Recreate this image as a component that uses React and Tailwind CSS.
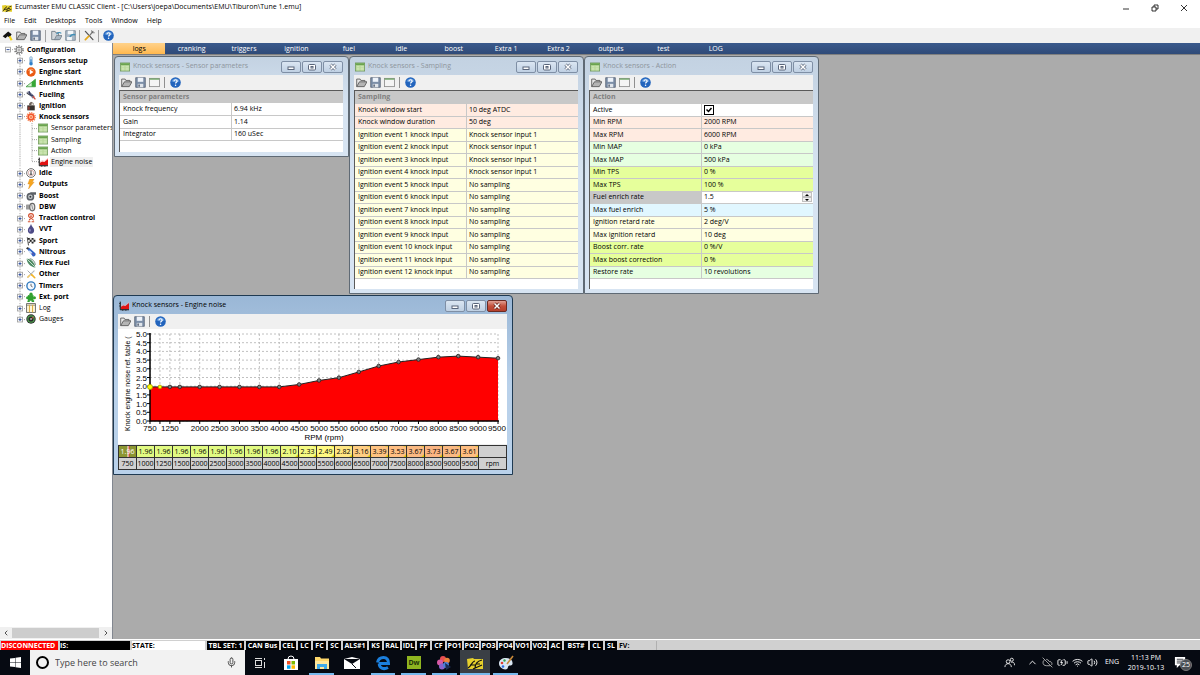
import clsx from 'clsx'
import { Mic, ChevronUp, CloudOff, Wifi, Volume2, BatteryCharging, ChevronLeft, ChevronRight } from 'lucide-react'

const MENUS = ['File', 'Edit', 'Desktops', 'Tools', 'Window', 'Help']

const TABS = ['logs', 'cranking', 'triggers', 'ignition', 'fuel', 'idle', 'boost', 'Extra 1', 'Extra 2', 'outputs', 'test', 'LOG']

const TREE = [
  { label: 'Configuration', level: 0, icon: 'gear', box: 'minus' },
  { label: 'Sensors setup', level: 1, icon: 'thermo', box: 'plus' },
  { label: 'Engine start', level: 1, icon: 'start', box: 'plus' },
  { label: 'Enrichments', level: 1, icon: 'ramp', box: 'plus' },
  { label: 'Fueling', level: 1, icon: 'injector', box: 'plus' },
  { label: 'Ignition', level: 1, icon: 'coil', box: 'plus' },
  { label: 'Knock sensors', level: 1, icon: 'knock', box: 'minus' },
  { label: 'Sensor parameters', level: 2, icon: 'form' },
  { label: 'Sampling', level: 2, icon: 'form' },
  { label: 'Action', level: 2, icon: 'form' },
  { label: 'Engine noise', level: 2, icon: 'chart', selected: true, last: true },
  { label: 'Idle', level: 1, icon: 'idle', box: 'plus' },
  { label: 'Outputs', level: 1, icon: 'bolt', box: 'plus' },
  { label: 'Boost', level: 1, icon: 'turbo', box: 'plus' },
  { label: 'DBW', level: 1, icon: 'throttle', box: 'plus' },
  { label: 'Traction control', level: 1, icon: 'traction', box: 'plus' },
  { label: 'VVT', level: 1, icon: 'drop', box: 'plus' },
  { label: 'Sport', level: 1, icon: 'flag', box: 'plus' },
  { label: 'Nitrous', level: 1, icon: 'bottle', box: 'plus' },
  { label: 'Flex Fuel', level: 1, icon: 'leaf', box: 'plus' },
  { label: 'Other', level: 1, icon: 'tools', box: 'plus' },
  { label: 'Timers', level: 1, icon: 'timer', box: 'plus' },
  { label: 'Ext. port', level: 1, icon: 'puzzle', box: 'plus' },
  { label: 'Log', level: 1, icon: 'log', box: 'plus', plain: true },
  { label: 'Gauges', level: 1, icon: 'gauge', box: 'plus', plain: true, last: true },
]

const PINK = 'bg-[#ffebe1]'
const YELLOW = 'bg-[#ffffe1]'
const GREEN = 'bg-[#e6ffe1]'
const LIME = 'bg-[#e6ff9b]'
const BLUE = 'bg-[#e1f7ff]'

const SENSOR_ROWS = [
  ['Knock frequency', '6.94 kHz', 'bg-white'],
  ['Gain', '1.14', 'bg-white'],
  ['Integrator', '160 uSec', 'bg-white'],
]

const SAMPLING_ROWS = [
  ['Knock window start', '10 deg ATDC', PINK],
  ['Knock window duration', '50 deg', PINK],
  ...Array.from({ length: 12 }, (_, i) => [
    `Ignition event ${i + 1} knock input`,
    i < 4 ? 'Knock sensor input 1' : 'No sampling',
    YELLOW,
  ]),
]

const ACTION_ROWS = [
  ['Active', 'check', 'bg-white'],
  ['Min RPM', '2000 RPM', PINK],
  ['Max RPM', '6000 RPM', PINK],
  ['Min MAP', '0 kPa', GREEN],
  ['Max MAP', '500 kPa', GREEN],
  ['Min TPS', '0 %', LIME],
  ['Max TPS', '100 %', LIME],
  ['Fuel enrich rate', 'spin', 'bg-white'],
  ['Max fuel enrich', '5 %', BLUE],
  ['Ignition retard rate', '2 deg/V', YELLOW],
  ['Max ignition retard', '10 deg', YELLOW],
  ['Boost corr. rate', '0 %/V', LIME],
  ['Max boost correction', '0 %', LIME],
  ['Restore rate', '10 revolutions', GREEN],
]

const NOISE = [
  [750, 1.96, 'bg-[#8c9632]'],
  [1000, 1.96, 'bg-[#e1fa82]'],
  [1250, 1.96, 'bg-[#e1fa82]'],
  [1500, 1.96, 'bg-[#e1fa82]'],
  [2000, 1.96, 'bg-[#e1fa82]'],
  [2500, 1.96, 'bg-[#e1fa82]'],
  [3000, 1.96, 'bg-[#e1fa82]'],
  [3500, 1.96, 'bg-[#e1fa82]'],
  [4000, 1.96, 'bg-[#e1fa82]'],
  [4500, 2.1, 'bg-[#ebfa82]'],
  [5000, 2.33, 'bg-[#f5fa82]'],
  [5500, 2.49, 'bg-[#fffa82]'],
  [6000, 2.82, 'bg-[#ffe682]'],
  [6500, 3.16, 'bg-[#ffcd82]'],
  [7000, 3.39, 'bg-[#ffc382]'],
  [7500, 3.53, 'bg-[#ffbe82]'],
  [8000, 3.67, 'bg-[#fab982]'],
  [8500, 3.73, 'bg-[#fab482]'],
  [9000, 3.67, 'bg-[#fab982]'],
  [9500, 3.61, 'bg-[#ffbe82]'],
]

const FLAGS = [
  ['TBL SET: 1', 'w-[37px]'],
  ['CAN Bus', 'w-[33px]'],
  ['CEL', 'w-[15px]'],
  ['LC', 'w-[13px]'],
  ['FC', 'w-[13px]'],
  ['SC', 'w-[13px]'],
  ['ALS#1', 'w-[24px]'],
  ['KS', 'w-[13px]'],
  ['RAL', 'w-[16px]'],
  ['IDL', 'w-[13px]'],
  ['FP', 'w-[13px]'],
  ['CF', 'w-[13px]'],
  ['PO1', 'w-[15px]'],
  ['PO2', 'w-[15px]'],
  ['PO3', 'w-[15px]'],
  ['PO4', 'w-[15px]'],
  ['VO1', 'w-[15px]'],
  ['VO2', 'w-[15px]'],
  ['AC', 'w-[13px]'],
  ['BST#', 'w-[24px]'],
  ['CL', 'w-[13px]'],
  ['SL', 'w-[12px]'],
]

const ICONS = {
  gear: (
    <g fill="none" stroke="#777">
      <circle cx="8" cy="8" r="6.5" strokeWidth="2.4" strokeDasharray="2.2 1.9" />
      <circle cx="8" cy="8" r="4.6" strokeWidth="1.6" />
      <circle cx="8" cy="8" r="1.8" strokeWidth="1.2" />
    </g>
  ),
  thermo: (
    <g>
      <rect x="6" y="1" width="4" height="11" rx="2" fill="#d5e8f7" stroke="#6f9cc4" />
      <path d="M8 5v7" stroke="#2f7fc9" strokeWidth="2" />
      <circle cx="8" cy="12.5" r="2.8" fill="#2f7fc9" />
    </g>
  ),
  start: (
    <g>
      <circle cx="8" cy="8" r="7.5" fill="#ea5a12" />
      <path d="M4 6a5 5 0 0 1 8-1" stroke="#ffb27a" strokeWidth="1.5" fill="none" />
      <path d="M6 4l6 4-6 4z" fill="#fff" />
    </g>
  ),
  ramp: (
    <g>
      <path d="M0 14L15 2v12z" fill="#d8f0d2" stroke="#3c9a3c" strokeWidth="1.3" />
      <path d="M9 14V7L15 2v12z" fill="#35a835" />
    </g>
  ),
  injector: (
    <g>
      <path d="M1 3l4-1 9 8-3 4z" fill="#7b7f96" />
      <path d="M5 2l2 6 4 1" stroke="#333a60" strokeWidth="2" fill="none" />
      <path d="M11 10l4 5" stroke="#c9453a" strokeWidth="2" />
      <path d="M1 5l5 3" stroke="#23252f" strokeWidth="1.5" />
    </g>
  ),
  coil: (
    <g>
      <path d="M2 7h12v8H2z" fill="#37322f" />
      <path d="M5 7V4l3-3 4 2v4z" fill="#6d625b" />
      <path d="M3 9h3v5H3z" fill="#8c3a30" />
      <circle cx="10" cy="5" r="1.4" fill="#e8e4df" />
    </g>
  ),
  knock: (
    <g>
      <circle cx="8" cy="8" r="6" fill="#f2552c" />
      <circle cx="8" cy="8" r="7" fill="none" stroke="#f58a5a" strokeWidth="2" strokeDasharray="2 1.6" />
      <circle cx="8" cy="8" r="3.2" fill="#ffc9a8" />
      <circle cx="8" cy="8" r="1.8" fill="#f47b4a" />
    </g>
  ),
  form: (
    <g>
      <rect x="0.5" y="1.5" width="15" height="13" fill="#b9d99a" stroke="#5f8a4b" />
      <path d="M1 2h14v3H1z" fill="#6aa350" />
      <path d="M3 7.5h4M3 10h4M3 12.5h4M9 7.5h5M9 10h5M9 12.5h5" stroke="#dcefca" />
    </g>
  ),
  chart: (
    <g>
      <path d="M3 13V9l4-2 3 1 6-5v10z" fill="#e11212" />
      <path d="M3 8l4-2 3 1 6-5" stroke="#f3a5a5" fill="none" />
      <path d="M2 1v13h14" stroke="#111" strokeWidth="1.6" fill="none" />
      <path d="M0 4h2M0 8h2M6 14v2M11 14v2" stroke="#111" />
    </g>
  ),
  idle: (
    <g fill="none">
      <circle cx="8" cy="8" r="7" stroke="#666" strokeWidth="1.5" />
      <circle cx="8" cy="8" r="4.5" stroke="#c98a84" strokeWidth="1" />
      <path d="M8 4v6M6 10h4" stroke="#333" strokeWidth="1.5" />
    </g>
  ),
  bolt: <path d="M6 0h7l-3 5h3L4 16l2-8H3z" fill="#f6a51f" stroke="#d98512" strokeWidth=".6" />,
  turbo: (
    <g>
      <path d="M6 2h10v4h-4z" fill="#5b6066" />
      <circle cx="7" cy="9" r="6.2" fill="#5b6066" />
      <circle cx="7" cy="9" r="3.6" fill="#c6cace" />
      <circle cx="7" cy="9" r="1.6" fill="#33373b" />
    </g>
  ),
  throttle: (
    <g>
      <rect x="0" y="4" width="6" height="8" rx="1" fill="#9a9a9a" />
      <ellipse cx="10" cy="8" rx="5" ry="7" fill="#666" />
      <ellipse cx="10" cy="8" rx="3.2" ry="5" fill="#e4e4e4" />
      <path d="M9 4l2 8" stroke="#777" strokeWidth="1.2" />
    </g>
  ),
  traction: (
    <g fill="none" stroke="#d2502f" strokeWidth="1.7">
      <path d="M4 5a4 4 0 0 1 8 0c0 3-7 4-7 7M12 12c0-3-7-4-8-7" />
      <path d="M3 14h4M9 14h4M6 5h4" />
    </g>
  ),
  drop: (
    <g>
      <path d="M8 0c1 4 5 6 5 10a5 5.5 0 0 1-10 0c0-4 4-6 5-10z" fill="#4c4a86" />
      <ellipse cx="6.3" cy="10" rx="1.5" ry="2.5" fill="#8885bb" />
    </g>
  ),
  flag: (
    <g>
      <path d="M2 2l2 13" stroke="#333" strokeWidth="1.4" />
      <path d="M3 3c4-2 7 2 12 0l-1 8c-4 2-6-2-10 0z" fill="#e8e8e8" />
      <path d="M3 3h3v3H3zM9 3h3v3H9zM6 6h3v3H6zM12 6h3v3h-3zM4 9h2v2H4zM9 9h3v3H9z" fill="#222" />
    </g>
  ),
  bottle: (
    <g>
      <path d="M2 3l3-2 10 9c1 3-1 6-4 5z" fill="#2e62c4" />
      <path d="M6 5l4 4-2 2-4-4z" fill="#cfe0fa" />
      <path d="M0 2l3-2 2 2-3 2z" fill="#333" />
      <path d="M10 10l2 2" stroke="#9c4a9a" strokeWidth="1.5" />
    </g>
  ),
  leaf: (
    <g>
      <path d="M1 1c6 0 12 4 14 14C7 14 2 9 1 1z" fill="#4d8a63" />
      <path d="M2 2l12 12" stroke="#e1f0e6" strokeWidth="1.3" />
      <path d="M6 1c5 1 8 4 9 10" stroke="#2c5440" fill="none" />
    </g>
  ),
  tools: (
    <g strokeLinecap="round">
      <path d="M3 13L13 3" stroke="#b5babf" strokeWidth="2" />
      <path d="M3 3l5 5" stroke="#a0a5aa" strokeWidth="1.5" />
      <path d="M9 9l5 5" stroke="#f0b429" strokeWidth="2.6" />
      <path d="M3 13l3-3" stroke="#f0c96a" strokeWidth="2.4" />
    </g>
  ),
  timer: (
    <g fill="none">
      <circle cx="8" cy="8" r="6.6" stroke="#2f79bd" strokeWidth="2.2" fill="#f4f9ff" />
      <path d="M8 4.5V8l2.5 1.5" stroke="#444" strokeWidth="1.2" />
    </g>
  ),
  puzzle: (
    <g fill="#2fa02f">
      <rect x="3" y="5" width="9" height="9" />
      <circle cx="8" cy="3.500" r="2.600" />
      <circle cx="13.500" cy="9" r="2.400" />
      <circle cx="2.500" cy="9" r="2.400" />
      <path d="M3 13h3v3H2zM9 13h4v3H9z" />
    </g>
  ),
  log: (
    <g>
      <rect x="1" y="1" width="14" height="14" fill="#fff6d8" stroke="#555" strokeWidth="1.3" />
      <path d="M1 3.500h14" stroke="#555" />
      <path d="M5.500 3v12M10.500 3v12" stroke="#d8ab3d" strokeWidth="1.6" />
    </g>
  ),
  gauge: (
    <g>
      <circle cx="8" cy="8" r="7.500" fill="#2b2b2b" />
      <circle cx="8" cy="8" r="5" fill="none" stroke="#4da04d" strokeWidth="1.8" />
      <path d="M8 8l4-3" stroke="#f04a3a" strokeWidth="1.6" />
      <circle cx="8" cy="8" r="1.600" fill="#aaa" />
    </g>
  ),
  open: (
    <g>
      <path d="M1 14V3h5l1 2h6v3" fill="#e7e7e7" stroke="#5d5d5d" strokeWidth="1.3" />
      <path d="M1 14l4-7h11l-4 7z" fill="#b5b5b5" stroke="#555" strokeWidth="1.2" />
    </g>
  ),
  save: (
    <g>
      <path d="M1 1h14v14H1z" fill="#7d8fa8" stroke="#4a5568" />
      <path d="M4 1h8v6H4z" fill="#eef3fa" />
      <path d="M4 10h8v5H4z" fill="#dfe4ea" />
      <path d="M5 11h2v3H5z" fill="#4a5568" />
    </g>
  ),
  page: (
    <g>
      <rect x="0.700" y="2" width="14.500" height="12" fill="#f4f4f4" stroke="#8a8a8a" strokeWidth="1.200" />
      <path d="M1 3h14" stroke="#67a35e" strokeWidth="1.800" />
    </g>
  ),
  help: (
    <g>
      <circle cx="8" cy="8" r="7.700" fill="#2264bd" />
      <path d="M2 6a6.500 6.500 0 0 1 12 0c-4 2-8 2-12 0z" fill="#5c96dc" />
      <path d="M5.800 6.200c0-3 4.600-2.800 4.600 0 0 1.600-2.300 1.500-2.300 3.400" stroke="#fff" strokeWidth="1.700" fill="none" />
      <circle cx="8.100" cy="12" r="1.100" fill="#fff" />
    </g>
  ),
  plug: (
    <g>
      <path d="M1 9l8-7 5 4-3 5-3-2-3 3z" fill="#111" />
      <path d="M11 9l3 6" stroke="#f2d21b" strokeWidth="3" />
    </g>
  ),
  openArrow: (
    <g>
      <path d="M1 14V2h5l1 2h4v10z" fill="#d4d8dc" stroke="#6b7680" strokeWidth="1.200" />
      <path d="M5 14l3-6h8l-3 6z" fill="#a8b6c2" stroke="#6b7680" />
      <path d="M8 6c2-3 5-3 7-1" stroke="#3d8fb8" strokeWidth="1.500" fill="none" />
    </g>
  ),
  saveArrow: (
    <g>
      <path d="M1 1h14v14H1z" fill="#a9b8c6" stroke="#667788" />
      <path d="M4 1h8v5H4zM3 10h7v5H3z" fill="#f3f6f9" />
      <path d="M7 10c2-4 5-4 8-3" stroke="#3d8fb8" strokeWidth="2" fill="none" />
    </g>
  ),
  wrench: (
    <g strokeLinecap="round">
      <path d="M2 2l11 12" stroke="#555" strokeWidth="1.800" />
      <path d="M13 2L9 7" stroke="#777" strokeWidth="1.800" />
      <path d="M7 9l-5 5" stroke="#e5a91d" strokeWidth="2.600" />
      <path d="M11 1l1 3 3 0" stroke="#555" fill="none" />
    </g>
  ),
  emu: (
    <g>
      <path d="M0 4l6-1 1 1h9v10H1z" fill="#e5cf2c" />
      <path d="M1 13c3-1 4-7 7-7M3 10h5M8 13c0-4 3-7 7-8M9 9h4M6 14l9-4" stroke="#111" strokeWidth="1.200" fill="none" />
    </g>
  ),
}

function Icon({ name, className = 'size-[10px]' }) {
  return (
    <svg viewBox="0 0 16 16" className={clsx('shrink-0', className)} aria-hidden="true">
      {ICONS[name]}
    </svg>
  )
}

function Gutter({ box, last, line = true }) {
  return (
    <svg viewBox="0 0 12 12" preserveAspectRatio="none" className="w-3 h-full shrink-0" aria-hidden="true">
      {line && <path d={last ? 'M6 0v6' : 'M6 0v12'} stroke="#a0a0a0" strokeDasharray="1 1" />}
      <path d="M6 6h6" stroke="#a0a0a0" strokeDasharray="1 1" />
      {box && <rect x="3.500" y="3.500" width="5" height="5" fill="#fff" stroke="#a8a8a8" />}
      {box && <path d="M4.500 6h3" stroke="#2b4a9b" />}
      {box === 'plus' && <path d="M6 4.500v3" stroke="#2b4a9b" />}
    </svg>
  )
}

function TreeRow({ item }) {
  return (
    <li className="flex items-center min-h-0">
      <span className={clsx('shrink-0', item.level === 0 ? 'w-[2px]' : 'w-[14px]')} />
      {item.level === 2 && (
        <svg viewBox="0 0 12 12" preserveAspectRatio="none" className="w-3 h-full shrink-0" aria-hidden="true">
          <path d="M6 0v12" stroke="#a0a0a0" strokeDasharray="1 1" />
        </svg>
      )}
      <Gutter box={item.box} last={item.last} line={item.level > 0} />
      <Icon name={item.icon} />
      <a
        href="#"
        className={clsx(
          'ml-[2px] px-px leading-[10px] whitespace-nowrap',
          item.level < 2 && !item.plain && 'font-bold',
          item.selected && 'bg-[#f0f0f0]',
        )}
      >
        {item.label}
      </a>
    </li>
  )
}

function CaptionButton({ kind, active }) {
  const red = active && kind === 'Close'
  return (
    <button
      aria-label={kind}
      className={clsx(
        'w-5 h-3 rounded-[2px] border flex items-center justify-center',
        red ? 'border-[#6b2a22] bg-linear-to-b from-[#e0a094] via-[#c4503c] to-[#b5402c]' : 'border-[#7f8fa5] bg-linear-to-b from-[#dbe6f2] to-[#bfd0e3]',
      )}
    >
      <svg viewBox="0 0 10 8" className="w-[10px] h-2" fill="none" stroke={red ? '#5b1a14' : '#59657a'} aria-hidden="true">
        {kind === 'Minimize' && <rect x="2" y="4" width="6" height="2.500" fill="#fff" />}
        {kind === 'Maximize' && <rect x="1.500" y="1.500" width="7" height="5.500" rx="1" fill="#fff" />}
        {kind === 'Maximize' && <rect x="4" y="3.500" width="2" height="1.500" />}
        {kind === 'Close' && <path d="M2.500 1.500l5 5M7.500 1.500l-5 5" strokeWidth="3" />}
        {kind === 'Close' && <path d="M2.500 1.500l5 5M7.500 1.500l-5 5" stroke="#fff" strokeWidth="1.500" />}
      </svg>
    </button>
  )
}

function ToolButton({ name, label }) {
  return (
    <button aria-label={label} className="w-[14px] flex justify-center">
      <Icon name={name} className="size-[11px]" />
    </button>
  )
}

function MdiWindow({ title, icon, active, page = true, className, children }) {
  return (
    <section
      className={clsx(
        'absolute flex flex-col rounded-t-[4px] border pl-1 pr-[5px] pb-1',
        active
          ? 'border-[#1f3a52] bg-linear-to-b from-[#9ab7d6] via-[#b9d1ea] to-[#b9d1ea]'
          : 'border-[#5f6a75] bg-linear-to-b from-[#c3d2e2] via-[#d7e4f2] to-[#d7e4f2]',
        className,
      )}
    >
      <header className="flex items-center h-[18px] shrink-0 pl-px pt-px">
        <Icon name={icon} />
        <h2 className={clsx('ml-[3px] flex-1 whitespace-nowrap', active ? 'text-black' : 'text-[#8e959d]')}>{title}</h2>
        <div className="flex gap-px">
          <CaptionButton kind="Minimize" active={active} />
          <CaptionButton kind="Maximize" active={active} />
          <CaptionButton kind="Close" active={active} />
        </div>
      </header>
      <div className="flex items-center h-[15px] shrink-0 bg-[#f0f0f0]">
        <ToolButton name="open" label="Open" />
        <ToolButton name="save" label="Save" />
        {page && <ToolButton name="page" label="Defaults" />}
        <span className="mx-[3px] w-px h-[11px] bg-[#8f8f8f]" />
        <ToolButton name="help" label="Help" />
      </div>
      {children}
    </section>
  )
}

function CheckValue({ label }) {
  return (
    <label className="relative flex size-[10px]">
      <input type="checkbox" defaultChecked aria-label={label} className="peer size-[10px] appearance-none border border-black bg-white" />
      <svg viewBox="0 0 10 10" className="absolute inset-0 hidden peer-checked:block" aria-hidden="true">
        <path d="M2.500 4.500l2 2 3-3.500" fill="none" stroke="#000" strokeWidth="1.500" />
      </svg>
    </label>
  )
}

function SpinValue({ label }) {
  return (
    <div className="flex items-center justify-between">
      <input type="text" defaultValue="1.5" aria-label={label} className="w-20 h-[10px] outline-none" />
      <div className="flex flex-col pr-px">
        <button aria-label="Increase" className="w-[10px] h-[5px] border border-[#c0c0c0] bg-[#f0f0f0] flex items-center justify-center">
          <svg viewBox="0 0 6 3" className="w-1 h-[2px]"><path d="M0 3l3-3 3 3z" /></svg>
        </button>
        <button aria-label="Decrease" className="w-[10px] h-[5px] border border-[#c0c0c0] bg-[#f0f0f0] flex items-center justify-center">
          <svg viewBox="0 0 6 3" className="w-1 h-[2px]"><path d="M0 0l3 3 3-3z" /></svg>
        </button>
      </div>
    </div>
  )
}

function ParamTable({ title, rows, className }) {
  return (
    <div className="flex-1 border-t border-l border-[#5a5a5a] bg-white">
      <table className={clsx('w-full table-fixed border-collapse leading-[10px]', className)}>
        <tbody>
          <tr className="h-3 bg-[#c8c8c8]">
            <th colSpan={2} scope="colgroup" className="p-0 pl-[3px] text-left font-bold text-[#808080]">{title}</th>
          </tr>
          {rows.map(([label, value, tone]) => (
            <tr key={label} className={clsx('h-3 border-b border-[#c8c8c8]', tone)}>
              <th scope="row" className={clsx('p-0 pl-[3px] text-left font-normal border-r border-[#c8c8c8] whitespace-nowrap', value === 'spin' && 'bg-[#c8c8c8]')}>
                {label}
              </th>
              <td className="p-0 pl-[2px] whitespace-nowrap">
                {value === 'check' && <CheckValue label={label} />}
                {value === 'spin' && <SpinValue label={label} />}
                {value !== 'check' && value !== 'spin' && value}
              </td>
            </tr>
          ))}
        </tbody>
      </table>
    </div>
  )
}

const px = rpm => 32 + ((rpm - 750) * 348) / 8750
const py = v => 92 - v * 17.4

function NoiseChart() {
  const line = NOISE.map(([rpm, v]) => `${px(rpm)},${py(v)}`).join(' ')
  const ticks = Array.from({ length: 11 }, (_, i) => i / 2)
  return (
    <svg viewBox="0 0 389 115" className="w-full h-[115px] bg-white font-['Liberation_Sans',sans-serif] text-[8px]" role="img" aria-label="Knock engine noise by RPM">
      <g stroke="#c0c0c0" strokeDasharray="2 2">
        {ticks.map(t => <path key={t} d={`M32 ${py(t)}H380`} />)}
        {NOISE.map(([rpm]) => <path key={rpm} d={`M${px(rpm)} 5V92`} />)}
      </g>
      <polygon points={`32,92 ${line} 380,92`} fill="#f00" />
      <polyline points={line} fill="none" stroke="#222" />
      <path d="M32 4v88h349" fill="none" stroke="#000" strokeWidth="1.500" />
      {ticks.map(t => <path key={t} d={`M29 ${py(t)}h3`} stroke="#000" />)}
      {NOISE.map(([rpm]) => <path key={rpm} d={`M${px(rpm)} 92v3`} stroke="#000" />)}
      {ticks.map(t => <text key={t} x="29" y={py(t) + 3} textAnchor="end">{t.toFixed(1)}</text>)}
      {NOISE.filter(([rpm]) => rpm !== 1000 && rpm !== 1500).map(([rpm]) => (
        <text key={rpm} x={Math.min(px(rpm), 379)} y="102" textAnchor="middle">{rpm}</text>
      ))}
      <text x="206" y="111" textAnchor="middle">RPM (rpm)</text>
      <text transform="translate(12 102) rotate(-90)" className="text-[7px]">Knock engine noise ref. table (</text>
      {NOISE.map(([rpm, v], i) => (
        <circle
          key={rpm}
          cx={px(rpm)}
          cy={py(v)}
          r={i === 0 ? 2.5 : 1.8}
          fill={i < 2 ? '#ff0' : '#808080'}
          stroke={i < 2 ? '#a09a00' : '#222'}
          strokeWidth=".8"
        />
      ))}
    </svg>
  )
}

function NoiseTable() {
  return (
    <div className="flex-1 bg-[#f0f0f0] pt-px">
      <table className="w-full table-fixed border-collapse text-center leading-[10px] bg-[#d0d0d0]">
        <tbody>
          <tr className="h-3">
            {NOISE.map(([rpm, v, tone], i) => (
              <td
                key={rpm}
                className={clsx(
                  'p-0 border border-[#333]',
                  tone,
                  i === 0 && 'text-white bg-[linear-gradient(90deg,transparent_45%,#fff_45%,#fff_51%,#e03030_51%,#e03030_57%,transparent_57%)]',
                  v > 1.96 && 'bg-[linear-gradient(135deg,transparent_88%,#d8c800_88%)]',
                )}
              >
                {v.toFixed(2)}
              </td>
            ))}
            <td className="p-0 w-[28px] border border-[#333]" />
          </tr>
          <tr className="h-3">
            {NOISE.map(([rpm]) => <th key={rpm} scope="col" className="p-0 border border-[#333] font-normal">{rpm}</th>)}
            <th className="p-0 border border-[#333] font-normal">rpm</th>
          </tr>
        </tbody>
      </table>
    </div>
  )
}

function TaskButton({ label, open, current, children }) {
  return (
    <button aria-label={label} className={clsx('relative flex items-center justify-center', current && 'bg-[#3a3f45]')}>
      <svg viewBox="0 0 16 16" className="size-4" aria-hidden="true">{children}</svg>
      {open && <span className={clsx('absolute bottom-0 h-[2px] bg-[#76b9ed]', current ? 'inset-x-0' : 'inset-x-[3px]')} />}
    </button>
  )
}

function Taskbar() {
  return (
    <footer className="flex items-stretch h-[25px] shrink-0 bg-[#060a12] text-white">
      <button aria-label="Start" className="w-[30px] flex items-center justify-center">
        <svg viewBox="0 0 12 12" className="size-[11px]" fill="#fff"><path d="M0 1.700L5.500 1v4.700H0zM6 .900L12 0v5.700H6zM0 6.200h5.500V11L0 10.300zM6 6.200h6V12l-6-.900z" /></svg>
      </button>
      <label className="flex items-center w-[215px] bg-[#f2f2f2] pl-[6px] pr-2 text-[#444]">
        <span className="size-[13px] rounded-full border-2 border-black shrink-0" />
        <input type="text" aria-label="Search" placeholder="Type here to search" className="ml-[6px] flex-1 min-w-0 text-[9px] outline-none placeholder:text-[#444]" />
        <Mic size={11} strokeWidth={2} />
      </label>
      <nav className="grid grid-cols-9 w-[276px]">
        <TaskButton label="Task view">
          <g fill="none" stroke="#ddd"><rect x="3.500" y="5.500" width="6" height="5" /><path d="M3 3.500h7M3 12.500h7M12.500 3v2M12.500 7v6" /></g>
        </TaskButton>
        <TaskButton label="Store">
          <path d="M1 4h14v11H1z" fill="#fff" /><path d="M5 4a3 3 0 0 1 6 0" stroke="#fff" fill="none" />
          <path d="M4 6h3.500v3.500H4z" fill="#f25022" /><path d="M8.500 6H12v3.500H8.500z" fill="#7fba00" /><path d="M4 10.300h3.500v3.500H4z" fill="#00a4ef" /><path d="M8.500 10.300H12v3.500H8.500z" fill="#ffb900" />
        </TaskButton>
        <TaskButton label="File Explorer" open>
          <path d="M1 2h5l1 1.500h8V14H1z" fill="#ffd86b" /><path d="M1 6h14v8H1z" fill="#ffe79a" /><path d="M3 9h10v5h-3v-2H6v2H3z" fill="#3fa9e8" />
        </TaskButton>
        <TaskButton label="Mail">
          <path d="M0 4l8-2 8 2v10H0z" fill="#fff" /><path d="M0 4h16L8 9z" fill="#060a12" /><path d="M8 9l4 4" stroke="#060a12" fill="none" />
        </TaskButton>
        <TaskButton label="Edge" open>
          <path d="M4 8.500h9.500C13.500 4 11 2.500 8.500 2.500 5 2.500 3 5 2.500 7.500M4.300 8.500C4 13 8.500 15 13 12.500" stroke="#1b7fdc" strokeWidth="3" fill="none" />
        </TaskButton>
        <TaskButton label="Dreamweaver" open>
          <rect x="1" y="1" width="14" height="13" fill="#8fb520" />
          <text x="8" y="10" textAnchor="middle" fontSize="7" fontWeight="bold" fill="#22330a">Dw</text>
        </TaskButton>
        <TaskButton label="Photos" open>
          <circle cx="7" cy="4" r="3" fill="#e85050" /><circle cx="11" cy="5.500" r="2.800" fill="#e8833a" /><circle cx="4" cy="7.500" r="3" fill="#d85aa5" /><circle cx="6" cy="11.500" r="3" fill="#8a62cc" /><circle cx="10" cy="10" r="3" fill="#4a7fd8" /><path d="M9 8l6 4-5 3z" fill="#1b2c52" />
        </TaskButton>
        <TaskButton label="Ecumaster EMU" open current>{ICONS.emu}</TaskButton>
        <TaskButton label="Paint" open>
          <path d="M8 3c5 0 7 3 6.500 6-.500 2-3 1-4 2-1 1 0 3-3 3.500C3 14 1 11 1 8.500 1 5 4 3 8 3z" fill="#d9e6f2" />
          <circle cx="4" cy="8" r="1.300" fill="#e03c31" /><circle cx="6.500" cy="5.500" r="1.200" fill="#33a852" /><circle cx="5" cy="11.500" r="1.300" fill="#2f6fde" /><path d="M15 1L9 9" stroke="#c98a3a" strokeWidth="1.600" />
        </TaskButton>
      </nav>
      <div className="ml-auto flex items-center gap-1 pr-2 text-[7px]">
        <svg viewBox="0 0 12 12" className="size-[11px] mr-2" fill="none" stroke="#eee"><circle cx="4.500" cy="5" r="2" /><path d="M1 11c0-5 7-5 7 0" /><circle cx="8.500" cy="3" r="1.700" /><path d="M8 6c2-1 3.500 0 3.500 3" /></svg>
        <ChevronUp size={11} />
        <CloudOff size={11} className="text-[#aaa]" />
        <BatteryCharging size={11} />
        <Wifi size={11} />
        <Volume2 size={11} />
        <span className="w-5 text-center">ENG</span>
        <time className="w-[40px] text-center leading-[10px]">
          11:13 PM<br />2019-10-13
        </time>
        <button aria-label="Notifications" className="relative ml-1 w-[18px] h-4">
          <svg viewBox="0 0 14 14" className="size-[13px]"><path d="M1 1h11v9H6l-3 3v-3H1z" fill="#fff" /><path d="M3 3.500h7M3 5.500h7M3 7.500h7" stroke="#060a12" strokeWidth=".8" /></svg>
          <span className="absolute right-0 bottom-0 size-3 rounded-full bg-[#4a4f55] border border-[#777] text-[7px] leading-[10px] text-center">25</span>
        </button>
      </div>
    </footer>
  )
}

export default function App() {
  return (
    <div className="h-screen flex flex-col overflow-hidden bg-[#f0f0f0] font-['Open_Sans',sans-serif] text-[7px] text-black">
      <header className="flex items-center h-[15px] shrink-0 bg-white pl-[2px] pr-[2px]">
        <Icon name="emu" />
        <h1 className="ml-[3px] flex-1">Ecumaster EMU CLASSIC Client - [C:\Users\joepa\Documents\EMU\Tiburon\Tune 1.emu]</h1>
        <div className="flex">
          {['M1 5h6', 'M1 3h4v4H1zM3 3V1h4v4H5', 'M1 1l6 6M7 1l-6 6'].map((d, i) => (
            <button key={d} aria-label={['Minimize', 'Restore', 'Close'][i]} className="w-[29px] flex justify-center">
              <svg viewBox="0 0 8 8" className="size-2" fill="none" stroke="#000" strokeWidth=".8"><path d={d} /></svg>
            </button>
          ))}
        </div>
      </header>
      <nav className="flex items-center h-[13px] shrink-0 bg-white pl-1 gap-[9px]">
        {MENUS.map(m => <button key={m}>{m}</button>)}
      </nav>
      <div className="flex items-center h-[15px] shrink-0">
        <ToolButton name="plug" label="Connect" />
        <ToolButton name="open" label="Open" />
        <ToolButton name="save" label="Save" />
        <span className="mx-[3px] w-px h-3 bg-[#a0a0a0]" />
        <ToolButton name="openArrow" label="Import" />
        <ToolButton name="saveArrow" label="Export" />
        <span className="mx-[2px] w-px h-3 bg-[#a0a0a0]" />
        <ToolButton name="wrench" label="Options" />
        <span className="mx-[2px] w-px h-3 bg-[#a0a0a0]" />
        <ToolButton name="help" label="Help" />
      </div>

      <div className="flex flex-1 min-h-0">
        <aside className="w-[113px] shrink-0 flex flex-col border-r border-[#828790] bg-white overflow-hidden">
          <ul className="grid auto-rows-fr h-[282px] shrink-0 pt-px">
            {TREE.map(item => <TreeRow key={item.label} item={item} />)}
          </ul>
          <div className="mt-auto flex items-center h-3 bg-[#f0f0f0]">
            <button aria-label="Scroll left" className="w-3 flex justify-center"><ChevronLeft size={8} /></button>
            <span className="w-[87px] h-[10px] bg-[#cdcdcd]" />
            <button aria-label="Scroll right" className="ml-px w-3 flex justify-center"><ChevronRight size={8} /></button>
          </div>
        </aside>

        <main className="flex-1 min-w-0 flex flex-col bg-[#ababab]">
          <nav className="h-[11px] shrink-0 bg-linear-to-b from-[#3a5a8c] to-[#2f4a78]">
            <div className="grid grid-cols-12 w-[629px] h-full">
              {TABS.map((tab, i) => (
                <button key={tab} className={clsx('leading-[10px]', i === 0 ? 'bg-linear-to-b from-[#ffd28a] to-[#ffb84d] text-black' : 'text-white')}>{tab}</button>
              ))}
            </div>
          </nav>
          <div className="relative flex-1 min-h-0 border-t border-[#7f7f7f]">
            <MdiWindow title="Knock sensors - Sensor parameters" icon="form" className="left-px top-[1px] w-[235px] h-[101px]">
              <ParamTable title="Sensor parameters" rows={SENSOR_ROWS} className="h-[50px]" />
            </MdiWindow>
            <MdiWindow title="Knock sensors - Sampling" icon="form" className="left-[236px] top-[1px] w-[235px] h-[238px]">
              <ParamTable title="Sampling" rows={SAMPLING_ROWS} className="h-[188px]" />
            </MdiWindow>
            <MdiWindow title="Knock sensors - Action" icon="form" className="left-[471px] top-[1px] w-[235px] h-[238px]">
              <ParamTable title="Action" rows={ACTION_ROWS} className="h-[188px]" />
            </MdiWindow>
            <MdiWindow title="Knock sensors - Engine noise" icon="chart" active page={false} className="left-0 top-[240px] w-[400px] h-[180px]">
              <NoiseChart />
              <NoiseTable />
            </MdiWindow>
          </div>
        </main>
      </div>

      <div className="flex items-center h-[11px] shrink-0 gap-[2px] border-t border-white bg-[#d0d0d0] pl-px font-bold leading-[9px] whitespace-nowrap">
        <span className="w-[57px] bg-[#f00] text-white">DISCONNECTED</span>
        <span className="w-[70px] bg-black text-white">IS:</span>
        <span className="w-[73px] bg-white">STATE:</span>
        {FLAGS.map(([label, width]) => (
          <span key={label} className={clsx('shrink-0 bg-black text-white text-center overflow-hidden', width)}>{label}</span>
        ))}
        <span className="w-[38px] border-r border-[#b0b0b0]">FV:</span>
      </div>

      <Taskbar />
    </div>
  )
}
